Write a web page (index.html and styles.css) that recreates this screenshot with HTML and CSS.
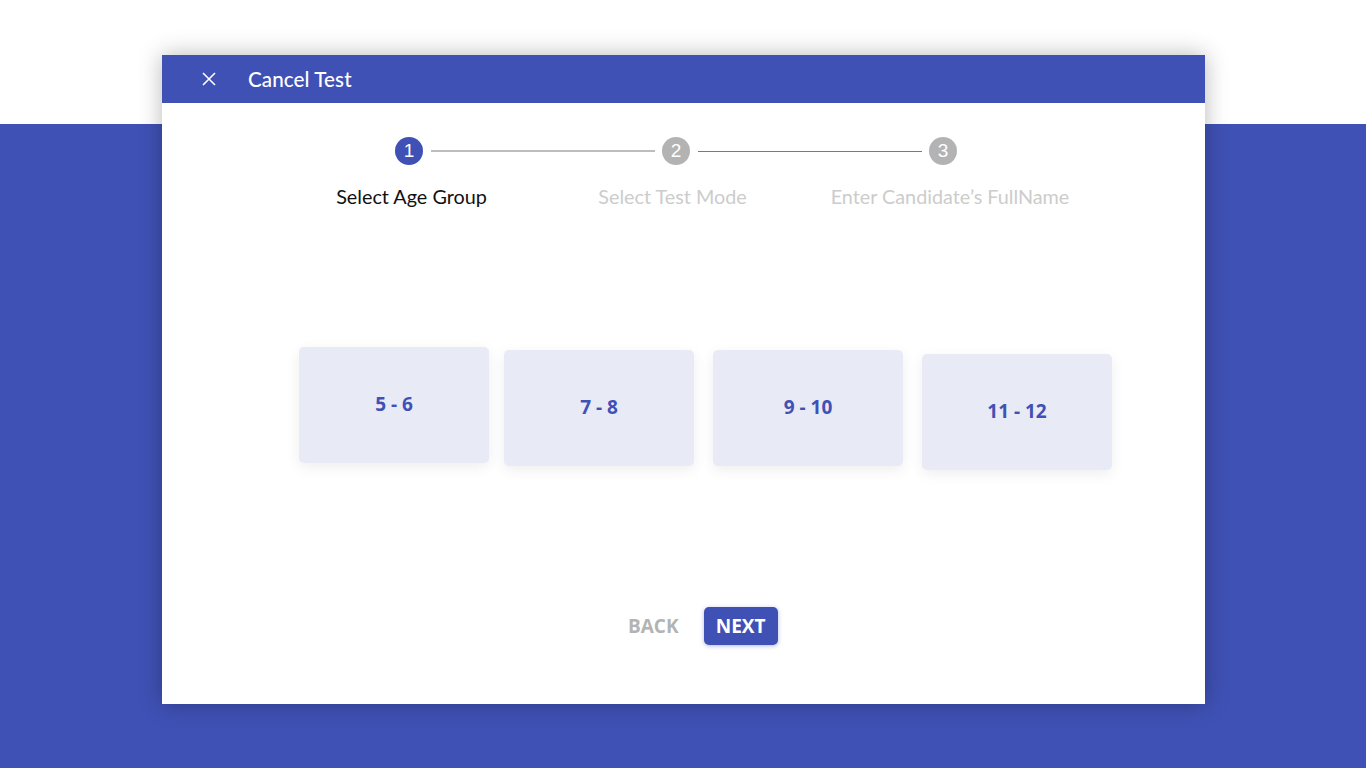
FILE: index.html
```html
<!DOCTYPE html>
<html>
<head>
<meta charset="utf-8">
<link rel="stylesheet" href="styles.css">
</head>
<body>
<div class="backdrop">
  <div class="modal">
    <div class="modal-header">
      <button class="close-btn" aria-label="Close">
        <svg width="14" height="14" viewBox="0 0 14 14"><path d="M1 1 L13 13 M13 1 L1 13" stroke="#fff" stroke-width="1.6" fill="none"/></svg>
      </button>
      <span class="title">Cancel Test</span>
    </div>
    <div class="modal-body">
      <div class="stepper">
        <span class="dot active">1</span>
        <span class="line light"></span>
        <span class="dot">2</span>
        <span class="line dark"></span>
        <span class="dot">3</span>
      </div>
      <div class="labels">
        <span class="label active">Select Age Group</span>
        <span class="label">Select Test Mode</span>
        <span class="label">Enter Candidate’s FullName</span>
      </div>
      <div class="cards">
        <div class="card c1">5 - 6</div>
        <div class="card c2">7 - 8</div>
        <div class="card c3">9 - 10</div>
        <div class="card c4">11 - 12</div>
      </div>
      <div class="actions">
        <button class="btn-back">BACK</button>
        <button class="btn-next">NEXT</button>
      </div>
    </div>
  </div>
</div>
</body>
</html>
```
FILE: styles.css
```css
html, body {
  margin: 0;
  padding: 0;
}
body {
  width: 1366px;
  height: 768px;
  overflow: hidden;
  background: linear-gradient(to bottom, #ffffff 0, #ffffff 124px, #3f51b5 124px, #3f51b5 100%);
  font-family: Lato, "Open Sans", sans-serif;
}
.backdrop {
  padding-top: 55px;
  padding-left: 162px;
}
.modal {
  width: 1043px;
  height: 649px;
  background: #ffffff;
  box-shadow: 0 0 22px rgba(0, 0, 0, 0.28);
  display: flex;
  flex-direction: column;
}
.modal-header {
  height: 48px;
  background: #3f51b5;
  display: flex;
  align-items: center;
  padding-left: 40px;
}
.close-btn {
  width: 14px;
  height: 14px;
  padding: 0;
  border: 0;
  background: transparent;
  display: flex;
  margin-right: 32px;
}
.title {
  color: #ffffff;
  font-size: 20.6px;
  font-weight: 500;
  letter-spacing: 0.1px;
}
.modal-body {
  flex: 1;
  display: flex;
  flex-direction: column;
}
.stepper {
  margin-top: 34px;
  margin-left: 233px;
  width: 562px;
  display: flex;
  align-items: center;
}
.dot {
  width: 28px;
  height: 28px;
  border-radius: 50%;
  background: #b3b3b3;
  color: #ffffff;
  font-family: "Liberation Sans", Arial, sans-serif;
  font-size: 19px;
  display: flex;
  align-items: center;
  justify-content: center;
  flex: none;
}
.dot.active {
  background: #3f51b5;
}
.line {
  flex: 1;
  height: 2px;
  margin: 0 7px 0 8px;
}
.line.light {
  background: #bdbdbd;
}
.line.dark {
  height: 1px;
  background: #7a7a7a;
}
.labels {
  margin-top: 19px;
  margin-left: 116px;
  width: 822px;
  display: grid;
  grid-template-columns: 267px 255px 300px;
}
.label {
  text-align: center;
  font-size: 19.8px;
  line-height: 24px;
  color: #cccccc;
  white-space: nowrap;
}
.label.active {
  color: #111111;
}
.cards {
  margin-top: 139px;
  margin-left: 137px;
  display: flex;
  align-items: flex-start;
}
.card {
  width: 190px;
  height: 116px;
  background: #e8eaf6;
  border-radius: 5px;
  box-shadow: 0 4px 14px rgba(0, 0, 0, 0.07);
  display: flex;
  align-items: center;
  justify-content: center;
  color: #3f51b5;
  font-family: "Open Sans", sans-serif;
  font-weight: 700;
  font-size: 19px;
  padding-bottom: 2px;
  box-sizing: border-box;
}
.c1 { margin-top: 0; }
.c2 { margin-top: 3px; margin-left: 15px; }
.c3 { margin-top: 3px; margin-left: 19px; }
.c4 { margin-top: 7px; margin-left: 19px; }
.actions {
  margin-top: 137px;
  margin-left: 466px;
  display: flex;
  align-items: center;
}
.btn-back {
  border: 0;
  background: transparent;
  padding: 0;
  font-family: "Open Sans", sans-serif;
  font-weight: 700;
  font-size: 19px;
  color: #b3b3b3;
  margin-right: 25px;
}
.btn-next {
  width: 74px;
  height: 38px;
  border: 0;
  border-radius: 5px;
  background: #3f51b5;
  color: #ffffff;
  font-family: "Open Sans", sans-serif;
  font-weight: 700;
  font-size: 19px;
  padding: 0;
  box-shadow: 0 1px 4px rgba(63, 81, 181, 0.4);
}
```
